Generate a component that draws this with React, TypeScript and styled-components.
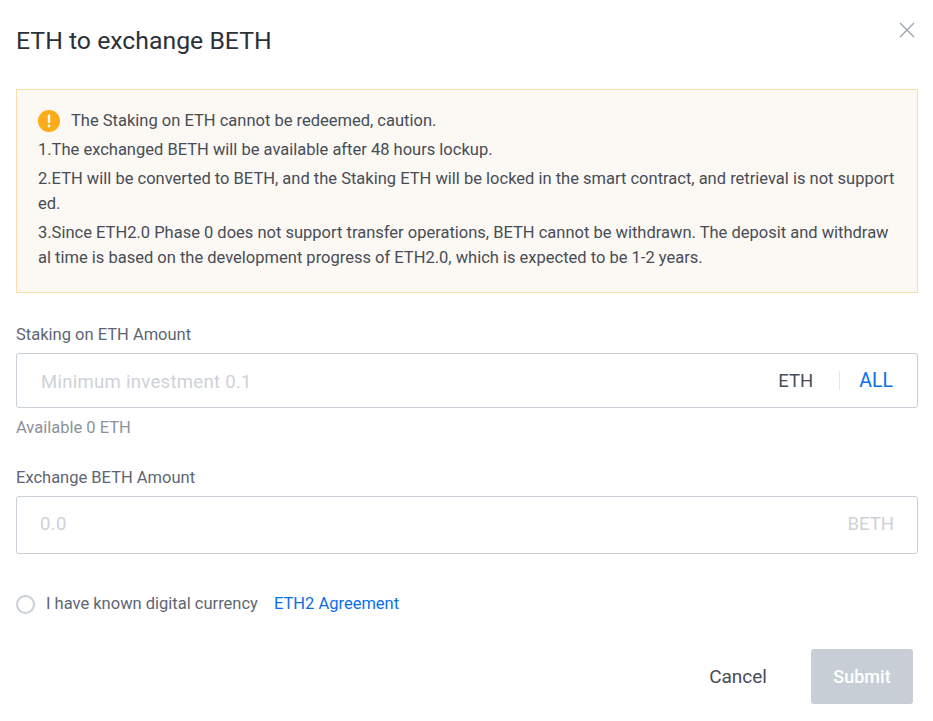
import React from "react";
import styled, { createGlobalStyle } from "styled-components";

const GlobalStyle = createGlobalStyle`
  html, body {
    margin: 0;
    padding: 0;
    background: #fff;
    font-family: Roboto, "Liberation Sans", sans-serif;
  }
  * { box-sizing: border-box; }
`;

const Modal = styled.div`
  width: 933px;
  height: 721px;
  padding: 25px 15px 0 16px;
  overflow: hidden;
`;
const Header = styled.div`
  display: flex;
  justify-content: space-between;
  align-items: flex-start;
  height: 64px;
`;
const Title = styled.h2`
  margin: 0;
  font-size: 24.8px;
  line-height: 32px;
  font-weight: 400;
  color: #2b3139;
`;
const CloseButton = styled.button`
  border: 0;
  padding: 0;
  margin: -3px 3px 0 0;
  width: 16px;
  height: 16px;
  background: none;
  display: flex;
`;
const Notice = styled.div`
  height: 204px;
  padding: 18px 21px 0;
  background: #fcf8f3;
  border: 1px solid #f6dfa8;
  color: #474d57;
  font-size: 16.5px;
  line-height: 25px;
  word-break: break-all;
`;
const NoticeLine = styled.p`
  margin: 0 0 4px;
`;
const NoticeHead = styled.div`
  display: flex;
  align-items: center;
  gap: 11px;
  margin-bottom: 4px;
`;
const Field = styled.div`
  margin-top: ${(p: { $top: number }) => p.$top}px;
`;
const Label = styled.div`
  font-size: 16.5px;
  line-height: 24px;
  color: #5e6673;
  margin-bottom: 6px;
`;
const InputBox = styled.div<{ $height: number; $pad: number; $lift?: boolean }>`
  display: flex;
  align-items: center;
  height: ${(p) => p.$height}px;
  padding: 0 ${(p) => (p.$lift ? "23px" : "24px")} ${(p) => (p.$lift ? "2px" : "0")} ${(p) => p.$pad}px;
  border: 1px solid #c9d0d7;
  border-radius: 3px;
`;
const Placeholder = styled.span<{ $drop?: boolean }>`
  flex: 1;
  padding-top: ${(p) => (p.$drop ? "2px" : "0")};
  font-size: 18.5px;
  letter-spacing: 0.3px;
  color: #cdd2d8;
`;
const Unit = styled.span<{ $muted?: boolean }>`
  font-size: 18.5px;
  color: ${(p) => (p.$muted ? "#cdd2d8" : "#474d57")};
`;
const Divider = styled.span`
  width: 1px;
  height: 19px;
  margin: 0 19px 0 26px;
  background: #e4e7ea;
`;
const AllLink = styled.a`
  font-size: 19.5px;
  color: #0b6fe8;
`;
const Hint = styled.div`
  margin-top: 8px;
  font-size: 16.5px;
  line-height: 24px;
  color: #8b929c;
`;
const Agreement = styled.div`
  display: flex;
  align-items: center;
  margin-top: 38px;
  font-size: 16.5px;
  line-height: 24px;
  color: #5e6673;
`;
const Radio = styled.span`
  width: 19px;
  height: 19px;
  margin: 0 11px 0 0;
  border: 2.5px solid #c9d0d7;
  border-radius: 50%;
`;
const AgreementLink = styled.a`
  margin-left: 16px;
  color: #0b6fe8;
`;
const Footer = styled.div`
  display: flex;
  justify-content: flex-end;
  align-items: center;
  margin: 33px 5px 0 0;
`;
const CancelButton = styled.button`
  border: 0;
  padding: 0;
  margin-right: 44px;
  background: none;
  font-family: inherit;
  font-size: 19px;
  color: #474d57;
`;
const SubmitButton = styled.button`
  width: 102px;
  height: 55px;
  border: 0;
  border-radius: 3px;
  background: #c7ced5;
  color: #fff;
  font-family: inherit;
  font-size: 18px;
  font-weight: 500;
`;

const WarnIcon = () => (
  <svg width="22" height="22" viewBox="0 0 22 22" style={{ flexShrink: 0 }}>
    <circle cx="11" cy="11" r="11" fill="#fcac19" />
    <rect x="9.8" y="4.5" width="2.4" height="8.5" rx="1" fill="#fff" />
    <circle cx="11" cy="16" r="1.4" fill="#fff" />
  </svg>
);

const CloseIcon = () => (
  <svg width="16" height="16" viewBox="0 0 16 16" fill="none">
    <path d="M1 1l14 14M15 1L1 15" stroke="#9aa1aa" strokeWidth="1.3" />
  </svg>
);

export default function App() {
  return (
    <Modal>
      <GlobalStyle />
      <Header>
        <Title>ETH to exchange BETH</Title>
        <CloseButton>
          <CloseIcon />
        </CloseButton>
      </Header>
      <Notice>
        <NoticeHead>
          <WarnIcon />
          <span>The Staking on ETH cannot be redeemed, caution.</span>
        </NoticeHead>
        <NoticeLine>1.The exchanged BETH will be available after 48 hours lockup.</NoticeLine>
        <NoticeLine>2.ETH will be converted to BETH, and the Staking ETH will be locked in the smart contract, and retrieval is not supported.</NoticeLine>
        <NoticeLine>3.Since ETH2.0 Phase 0 does not support transfer operations, BETH cannot be withdrawn. The deposit and withdrawal time is based on the development progress of ETH2.0, which is expected to be 1-2 years.</NoticeLine>
      </Notice>
      <Field $top={30}>
        <Label>Staking on ETH Amount</Label>
        <InputBox $height={55} $pad={24}>
          <Placeholder $drop>Minimum investment 0.1</Placeholder>
          <Unit>ETH</Unit>
          <Divider />
          <AllLink>ALL</AllLink>
        </InputBox>
        <Hint>Available 0 ETH</Hint>
      </Field>
      <Field $top={26}>
        <Label>Exchange BETH Amount</Label>
        <InputBox $height={58} $pad={23} $lift>
          <Placeholder>0.0</Placeholder>
          <Unit $muted>BETH</Unit>
        </InputBox>
      </Field>
      <Agreement>
        <Radio />
        I have known digital currency
        <AgreementLink>ETH2 Agreement</AgreementLink>
      </Agreement>
      <Footer>
        <CancelButton>Cancel</CancelButton>
        <SubmitButton>Submit</SubmitButton>
      </Footer>
    </Modal>
  );
}
